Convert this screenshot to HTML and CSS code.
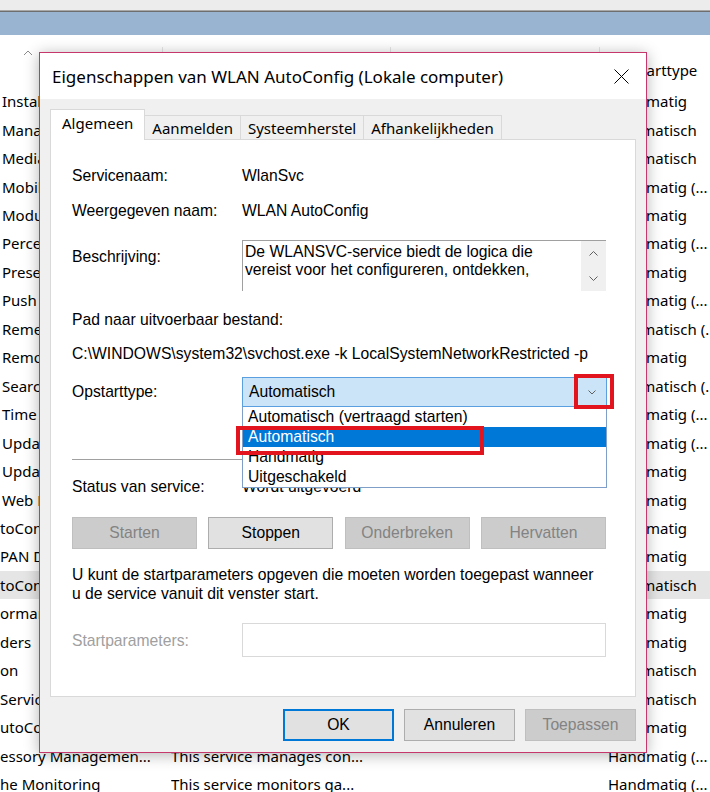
FILE: index.html
```html
<!DOCTYPE html>
<html lang="nl">
<head>
<meta charset="utf-8">
<title>Services</title>
<link rel="stylesheet" href="styles.css">
</head>
<body>
<div class="services">
  <div class="topstrip"></div>
  <div class="topline"></div>
  <div class="bluebar"></div>
  <div class="list">
    <div class="list-head">
      <div class="head-seps">
        <div class="hsep"><svg class="caret" width="10" height="6" viewBox="0 0 10 6"><polyline points="1,5 5,1 9,5" fill="none" stroke="#8c8c8c" stroke-width="1"/></svg></div>
        <div class="hsep"></div>
        <div class="hsep"></div>
        <div class="hsep"></div>
      </div>
      <div class="row head-row"><span class="name"></span><span>Beschrijving</span><span>Status</span><span class="start">Opstarttype</span></div>
    </div>
    <div class="row"><span class="name">Installer</span><span>Hiermee kunnen toepassingen worden...</span><span></span><span class="start">Handmatig</span></div>
    <div class="row"><span class="name">Management Instrumentation</span><span>Biedt een algemene interface...</span><span>Wordt uitgevoerd</span><span class="start">Automatisch</span></div>
    <div class="row"><span class="name">Media Player Network Sharing</span><span>Deelt Windows Media Player...</span><span></span><span class="start">Automatisch</span></div>
    <div class="row"><span class="name">Mobile Hotspot Service</span><span>Biedt de mogelijkheid...</span><span></span><span class="start">Handmatig (...</span></div>
    <div class="row"><span class="name">Modules Installer</span><span>Hiermee kunnen Windows-updates...</span><span></span><span class="start">Handmatig</span></div>
    <div class="row"><span class="name">Perception Service</span><span>Hiermee worden ruimtelijke...</span><span></span><span class="start">Handmatig (...</span></div>
    <div class="row"><span class="name">Presentation Foundation</span><span>Optimaliseert de prestaties...</span><span></span><span class="start">Handmatig</span></div>
    <div class="row"><span class="name">Push Notifications</span><span>Deze service wordt uitgevoerd...</span><span>Wordt uitgevoerd</span><span class="start">Handmatig (...</span></div>
    <div class="row"><span class="name">Remediation Service</span><span>Herstelt onderdelen van...</span><span></span><span class="start">Automatisch (...</span></div>
    <div class="row"><span class="name">Remote Management</span><span>De service Windows Remote...</span><span></span><span class="start">Handmatig</span></div>
    <div class="row"><span class="name">Search</span><span>Biedt indexering van inhoud...</span><span>Wordt uitgevoerd</span><span class="start">Automatisch (...</span></div>
    <div class="row"><span class="name">Time</span><span>Onderhoudt de datum- en tijd...</span><span></span><span class="start">Handmatig (...</span></div>
    <div class="row"><span class="name">Update</span><span>Hiermee worden updates...</span><span></span><span class="start">Handmatig (...</span></div>
    <div class="row"><span class="name">Update Medic Service</span><span>Hiermee worden onderdelen...</span><span></span><span class="start">Handmatig</span></div>
    <div class="row"><span class="name">Web Proxy Auto-Discovery</span><span>WinHTTP implementeert...</span><span>Wordt uitgevoerd</span><span class="start">Handmatig</span></div>
    <div class="row"><span class="name cut">toConfig</span><span>De Wired AutoConfig-service...</span><span></span><span class="start">Handmatig</span></div>
    <div class="row"><span class="name cut">PAN Direct</span><span>Beheert verbindingen met...</span><span></span><span class="start">Handmatig</span></div>
    <div class="row selected"><span class="name cut">toConfig</span><span>De WLANSVC-service biedt...</span><span>Wordt uitgevoerd</span><span class="start">Automatisch</span></div>
    <div class="row"><span class="name cut">ormance Adapter</span><span>Biedt informatie over...</span><span></span><span class="start">Handmatig</span></div>
    <div class="row"><span class="name cut">ders</span><span>Met deze service worden...</span><span></span><span class="start">Handmatig</span></div>
    <div class="row"><span class="name cut">on</span><span>Hiermee worden netwerk...</span><span>Wordt uitgevoerd</span><span class="start">Automatisch</span></div>
    <div class="row"><span class="name cut">Service</span><span>Deze service host...</span><span>Wordt uitgevoerd</span><span class="start">Automatisch</span></div>
    <div class="row"><span class="name cut">utoConfig</span><span>Deze service beheert...</span><span></span><span class="start">Handmatig</span></div>
    <div class="row"><span class="name cut">essory Managemen...</span><span>This service manages con...</span><span></span><span class="start">Handmatig (...</span></div>
    <div class="row"><span class="name cut">he Monitoring</span><span>This service monitors ga...</span><span></span><span class="start">Handmatig (...</span></div>
  </div>
</div>

<div class="dialog">
  <div class="titlebar">
    <span class="title">Eigenschappen van WLAN AutoConfig (Lokale computer)</span>
    <svg class="close" width="15" height="15" viewBox="0 0 15 15"><path d="M0.5 0.5 L14.5 14.5 M14.5 0.5 L0.5 14.5" stroke="#000" stroke-width="1" fill="none"/></svg>
  </div>
  <div class="dlg-body">
    <div class="tabs">
      <div class="tab active">Algemeen</div>
      <div class="tab">Aanmelden</div>
      <div class="tab">Systeemherstel</div>
      <div class="tab">Afhankelijkheden</div>
    </div>
    <div class="panel">
      <div class="field">
        <span class="label">Servicenaam:</span>
        <span>WlanSvc</span>
      </div>
      <div class="field f-display">
        <span class="label">Weergegeven naam:</span>
        <span>WLAN AutoConfig</span>
      </div>
      <div class="field f-desc">
        <span class="label label-desc">Beschrijving:</span>
        <div class="desc">
          <div class="desc-text">De WLANSVC-service biedt de logica die<br>vereist voor het configureren, ontdekken,<br>verbinden met en verbreken van verbindingen</div>
          <div class="vscroll">
            <div class="sbtn"><svg width="9" height="5" viewBox="0 0 9 5"><polyline points="0.5,4.5 4.5,0.5 8.5,4.5" fill="none" stroke="#606060" stroke-width="1"/></svg></div>
            <div class="sbtn"><svg width="9" height="5" viewBox="0 0 9 5"><polyline points="0.5,0.5 4.5,4.5 8.5,0.5" fill="none" stroke="#606060" stroke-width="1"/></svg></div>
          </div>
        </div>
      </div>
      <div class="path-label">Pad naar uitvoerbaar bestand:</div>
      <div class="path">C:\WINDOWS\system32\svchost.exe -k LocalSystemNetworkRestricted -p</div>
      <div class="field f-startup">
        <span class="label label-startup">Opstarttype:</span>
        <div class="combo">
          <span>Automatisch</span>
          <svg class="combo-arrow" width="8" height="5" viewBox="0 0 8 5"><polyline points="0.5,0.5 4,4 7.5,0.5" fill="none" stroke="#606060" stroke-width="1"/></svg>
          <div class="mark mark-arrow"></div>
          <ul class="droplist">
            <li>Automatisch (vertraagd starten)</li>
            <li class="sel">Automatisch</li>
            <li>Handmatig</li>
            <li>Uitgeschakeld</li>
          </ul>
          <div class="mark mark-item"></div>
        </div>
      </div>
      <div class="sep"></div>
      <div class="field f-status">
        <span class="label">Status van service:</span>
        <span>Wordt uitgevoerd</span>
      </div>
      <div class="svc-buttons">
        <div class="btn disabled">Starten</div>
        <div class="btn">Stoppen</div>
        <div class="btn disabled">Onderbreken</div>
        <div class="btn disabled">Hervatten</div>
      </div>
      <p class="note">U kunt de startparameters opgeven die moeten worden toegepast wanneer<br>u de service vanuit dit venster start.</p>
      <div class="field f-params">
        <span class="label label-params">Startparameters:</span>
        <div class="param-input"></div>
      </div>
    </div>
    <div class="dlg-buttons">
      <div class="btn dbtn default">OK</div>
      <div class="btn dbtn">Annuleren</div>
      <div class="btn dbtn disabled">Toepassen</div>
    </div>
  </div>
</div>
</body>
</html>
```

FILE: styles.css
```css
* { box-sizing: border-box; }

body {
  margin: 0;
  width: 710px;
  height: 792px;
  overflow: hidden;
  position: relative;
  background: #fff;
  color: #000;
  font-family: "Noto Sans", "Liberation Sans", sans-serif;
}

/* background services window */
.topstrip { height: 10px; background: #ececec; }
.topline { height: 2px; background: #6e6e6e; border-top: 1px solid #a8a8a8; }
.bluebar { height: 23px; background: #99b4d1; }

.list { font-size: 15px; }
.list-head { height: 52px; display: flex; flex-direction: column; }
.head-seps {
  height: 23.5px;
  padding-top: 12px;
  display: grid;
  grid-template-columns: 162px 228px 209px 1fr;
}
.hsep { height: 15px; }
.hsep + .hsep { border-left: 1px solid #e5e5e5; }
.caret { display: block; margin: 3px 0 0 23px; }

.row {
  display: grid;
  grid-template-columns: 171px 219px 218px 1fr;
  height: 28.46px;
  align-items: center;
  white-space: nowrap;
}
.row > span { overflow: hidden; }
.row .name { padding-left: 2px; }
.row .name.cut { padding-left: 0; }
.head-row { height: 28.5px; padding-bottom: 5px; }
.head-row .start { padding-left: 5px; }
.row.selected { background: #e5e5e5; }

/* dialog */
.dialog {
  position: absolute;
  left: 39px;
  top: 52px;
  width: 608px;
  height: 701px;
  border: 1px solid #c6386c;
  background: #f0f0f0;
  box-shadow: 0 2px 14px rgba(0, 0, 0, 0.3);
  display: flex;
  flex-direction: column;
}
.titlebar {
  height: 46px;
  flex: none;
  background: #fff;
  display: flex;
  align-items: center;
  justify-content: space-between;
  padding: 0 17px 0 12px;
  font-size: 17px;
}
.close { display: block; }

.dlg-body {
  flex: 1;
  padding: 0 10px 11px;
  display: flex;
  flex-direction: column;
}
.tabs {
  height: 40px;
  flex: none;
  display: flex;
  align-items: flex-end;
  font-size: 15px;
}
.tab {
  height: 24px;
  padding: 0 7px;
  border: 1px solid #d9d9d9;
  border-bottom: none;
  border-left: none;
  background: #f0f0f0;
  display: flex;
  align-items: center;
}
.tab.active {
  height: 31px;
  padding: 0 11px 4px 11px;
  background: #fff;
  border-left: 1px solid #d9d9d9;
  margin-bottom: -1px;
  position: relative;
  z-index: 1;
}

.panel {
  height: 558px;
  flex: none;
  background: #fff;
  border: 1px solid #d9d9d9;
  padding: 27px 28px 0 21px;
  font-family: "Liberation Sans", Arial, sans-serif;
  font-size: 15.7px;
  line-height: 18px;
}
.field { display: flex; }
.label { width: 170px; flex: none; }
.f-display { margin-top: 17px; }
.f-desc { margin-top: 20px; }
.label-desc { padding-top: 8px; }
.desc {
  width: 364px;
  height: 51px;
  border-top: 1px solid #a0a0a0;
  border-left: 1px solid #a0a0a0;
  display: flex;
}
.desc-text {
  flex: 1;
  height: 38px;
  overflow: hidden;
  padding: 2px 0 0 2px;
}
.vscroll {
  width: 25px;
  flex: none;
  background: #f0f0f0;
  display: flex;
  flex-direction: column;
}
.sbtn {
  height: 25px;
  display: flex;
  align-items: center;
  justify-content: center;
}
.path-label { margin-top: 20px; }
.path { margin-top: 16px; white-space: nowrap; }
.f-startup { margin-top: 14px; }
.label-startup { padding-top: 6px; }
.combo {
  position: relative;
  width: 365px;
  height: 30px;
  border: 1px solid #5a9fe0;
  background: #cce4f7;
  padding: 0 10px 0 6px;
  display: flex;
  align-items: center;
}
.combo-arrow { margin-left: auto; display: block; }
.mark {
  position: absolute;
  border: 4px solid #e2141e;
  z-index: 3;
}
.mark-arrow { left: 331px; top: -4px; width: 40px; height: 35px; }
.mark-item { left: -7px; top: 48px; width: 248px; height: 29px; }
.droplist {
  position: absolute;
  left: -1px;
  top: 29px;
  width: 365px;
  height: 81px;
  margin: 0;
  padding: 0;
  list-style: none;
  background: #fff;
  border: 1px solid #7f9fc8;
  border-top: none;
  z-index: 2;
  line-height: 19.75px;
}
.droplist li { height: 20px; padding-left: 5px; white-space: nowrap; }
.droplist li.sel { background: #0078d7; color: #fff; }

.sep { margin-top: 52px; height: 1px; width: 534px; background: #a0a0a0; }
.f-status { margin-top: 18px; }

.svc-buttons {
  margin-top: 21px;
  width: 534px;
  display: flex;
  justify-content: space-between;
}
.btn {
  width: 125px;
  height: 32px;
  background: #e1e1e1;
  border: 1px solid #adadad;
  display: flex;
  align-items: center;
  justify-content: center;
  font-family: "Liberation Sans", Arial, sans-serif;
  font-size: 15.7px;
}
.btn.disabled { background: #cccccc; border-color: #bfbfbf; color: #838383; }

.note { margin: 16px 0 0; line-height: 19px; white-space: nowrap; }
.f-params { margin-top: 20px; }
.label-params { padding-top: 9px; color: #a0a0a0; }
.param-input { width: 364px; height: 34px; border: 1px solid #d9d9d9; background: #fff; }

.dlg-buttons {
  margin-top: 12px;
  display: flex;
  justify-content: flex-end;
  gap: 10px;
}
.dbtn { width: 111px; }
.dbtn.default { border: 2px solid #0078d7; }
```
